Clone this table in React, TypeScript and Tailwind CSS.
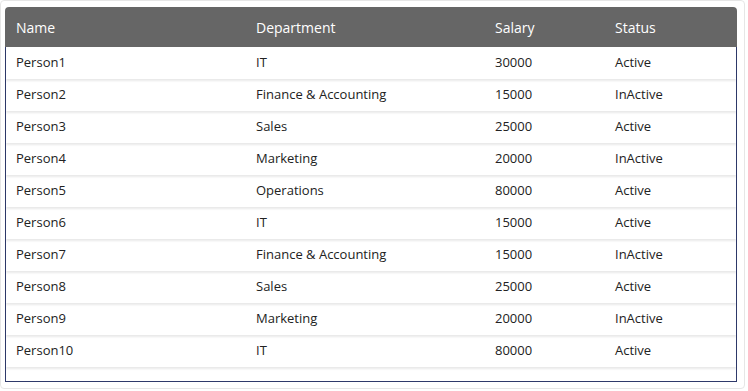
import React from 'react';

interface Employee {
    name: string;
    department: string;
    salary: number;
    status: 'Active' | 'InActive';
}

const employees: Employee[] = [
    { name: 'Person1', department: 'IT', salary: 30000, status: 'Active' },
    { name: 'Person2', department: 'Finance & Accounting', salary: 15000, status: 'InActive' },
    { name: 'Person3', department: 'Sales', salary: 25000, status: 'Active' },
    { name: 'Person4', department: 'Marketing', salary: 20000, status: 'InActive' },
    { name: 'Person5', department: 'Operations', salary: 80000, status: 'Active' },
    { name: 'Person6', department: 'IT', salary: 15000, status: 'Active' },
    { name: 'Person7', department: 'Finance & Accounting', salary: 15000, status: 'InActive' },
    { name: 'Person8', department: 'Sales', salary: 25000, status: 'Active' },
    { name: 'Person9', department: 'Marketing', salary: 20000, status: 'InActive' },
    { name: 'Person10', department: 'IT', salary: 80000, status: 'Active' },
];

const cols = 'grid grid-cols-[240px_239px_120px_1fr]';

const App: React.FC = () => {
    return (
        <div className="w-[748px] h-[391px] bg-white font-['Open_Sans',sans-serif]">
            <div className="w-[745px] h-[389px] rounded-[4px] border border-[#e6e6e6] pt-[6px] pl-[4px] pr-[7px] flex flex-col">
                {/* Header */}
                <div className={`${cols} px-[11px] h-[40px] items-center bg-[#666666] rounded-t-[4px] text-white text-[14px]`}>
                    <div>Name</div>
                    <div>Department</div>
                    <div>Salary</div>
                    <div>Status</div>
                </div>

                {/* Rows */}
                <div className="h-[335px] border border-t-0 border-[#2f3a6b]">
                    {employees.map((emp) => (
                        <div
                            key={emp.name}
                            className={`${cols} px-[10px] h-[32px] items-center text-[13px] text-[#222] shadow-[0_2px_2px_rgba(0,0,0,0.09)]`}
                        >
                            <div>{emp.name}</div>
                            <div>{emp.department}</div>
                            <div>{emp.salary}</div>
                            <div>{emp.status}</div>
                        </div>
                    ))}
                </div>
            </div>
        </div>
    );
};

export default App;
